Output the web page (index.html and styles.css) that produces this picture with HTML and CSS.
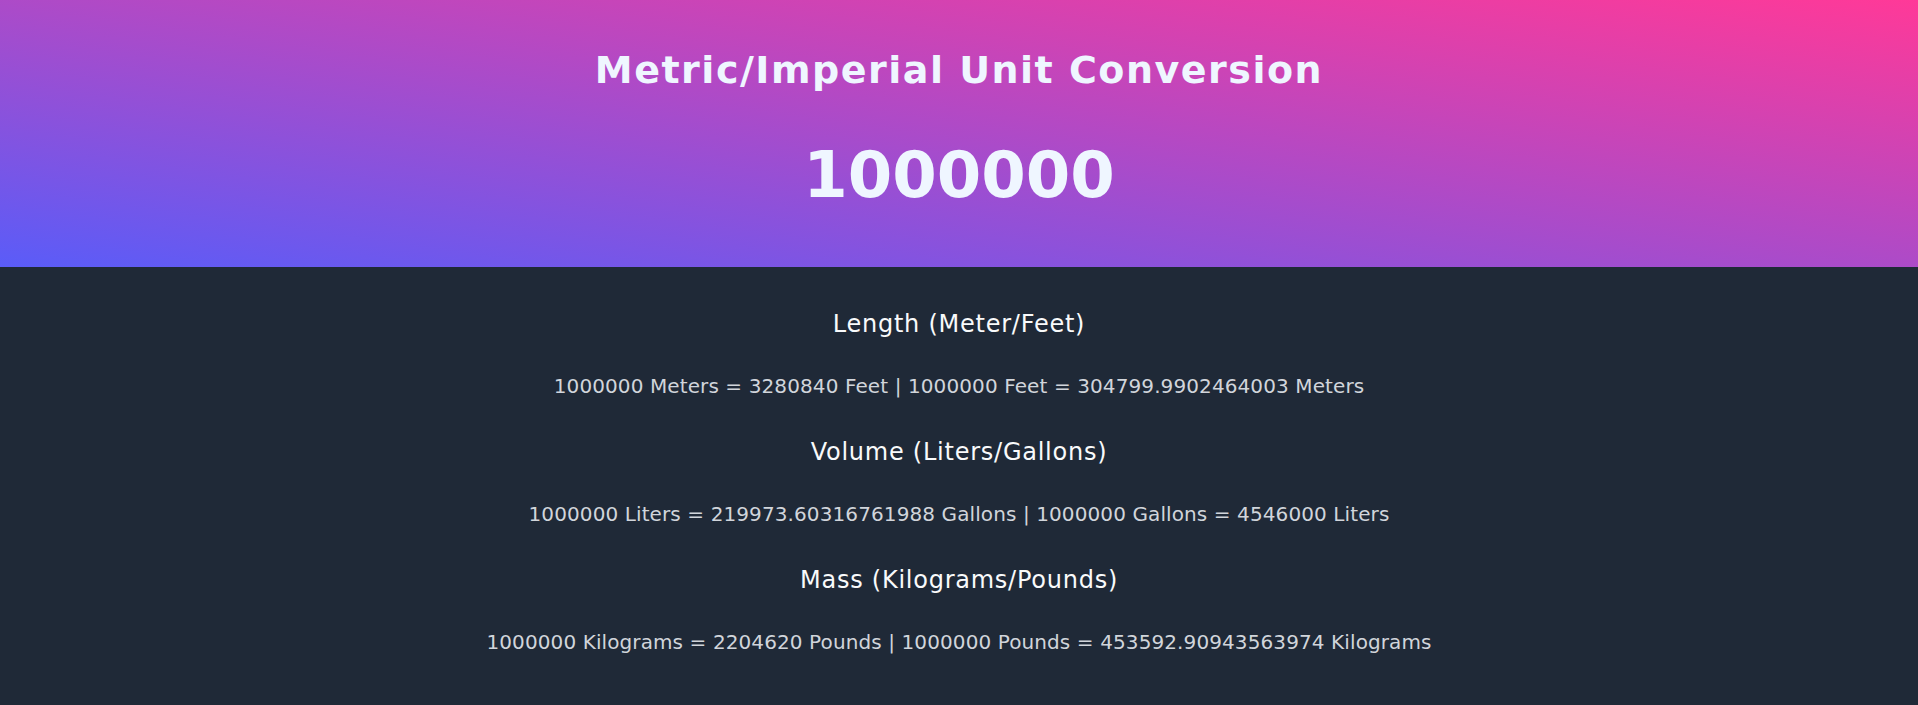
FILE: index.html
```html
<!DOCTYPE html>
<html lang="en">
<head>
<meta charset="utf-8">
<title>Metric/Imperial Unit Conversion</title>
<link rel="stylesheet" href="styles.css">
</head>
<body>
<header class="hero">
  <h1 class="hero-title">Metric/Imperial Unit Conversion</h1>
  <div class="hero-value">1000000</div>
</header>
<main class="results">
  <section class="group">
    <h2 class="group-title">Length (Meter/Feet)</h2>
    <p class="group-text">1000000 Meters = 3280840 Feet | 1000000 Feet = 304799.9902464003 Meters</p>
  </section>
  <section class="group">
    <h2 class="group-title">Volume (Liters/Gallons)</h2>
    <p class="group-text">1000000 Liters = 219973.60316761988 Gallons | 1000000 Gallons = 4546000 Liters</p>
  </section>
  <section class="group">
    <h2 class="group-title">Mass (Kilograms/Pounds)</h2>
    <p class="group-text">1000000 Kilograms = 2204620 Pounds | 1000000 Pounds = 453592.90943563974 Kilograms</p>
  </section>
</main>
</body>
</html>
```
FILE: styles.css
```css
* { box-sizing: border-box; }
html, body {
  margin: 0;
  padding: 0;
  background: #1f2937;
  font-family: "DejaVu Sans", Verdana, sans-serif;
  height: 100%;
}
.hero {
  background: linear-gradient(to top right, #5a5cf8, #ff3998);
  padding: 47px 0 54px;
  text-align: center;
  color: #eff6ff;
}
.hero-title {
  margin: 0;
  font-size: 38px;
  line-height: 46px;
  font-weight: 700;
  letter-spacing: 1.5px;
}
.hero-value {
  margin-top: 44px;
  font-size: 64px;
  line-height: 76px;
  font-weight: 700;
}
.results {
  padding-top: 42px;
  text-align: center;
  display: flex;
  flex-direction: column;
  gap: 39px;
}
.group-title {
  margin: 0;
  font-size: 24px;
  line-height: 30px;
  font-weight: 400;
  letter-spacing: 0.75px;
  color: #f9fafb;
}
.group-text {
  margin: 35px 0 0;
  font-size: 20px;
  line-height: 24px;
  letter-spacing: 0.1px;
  color: #d1d5db;
}
```
